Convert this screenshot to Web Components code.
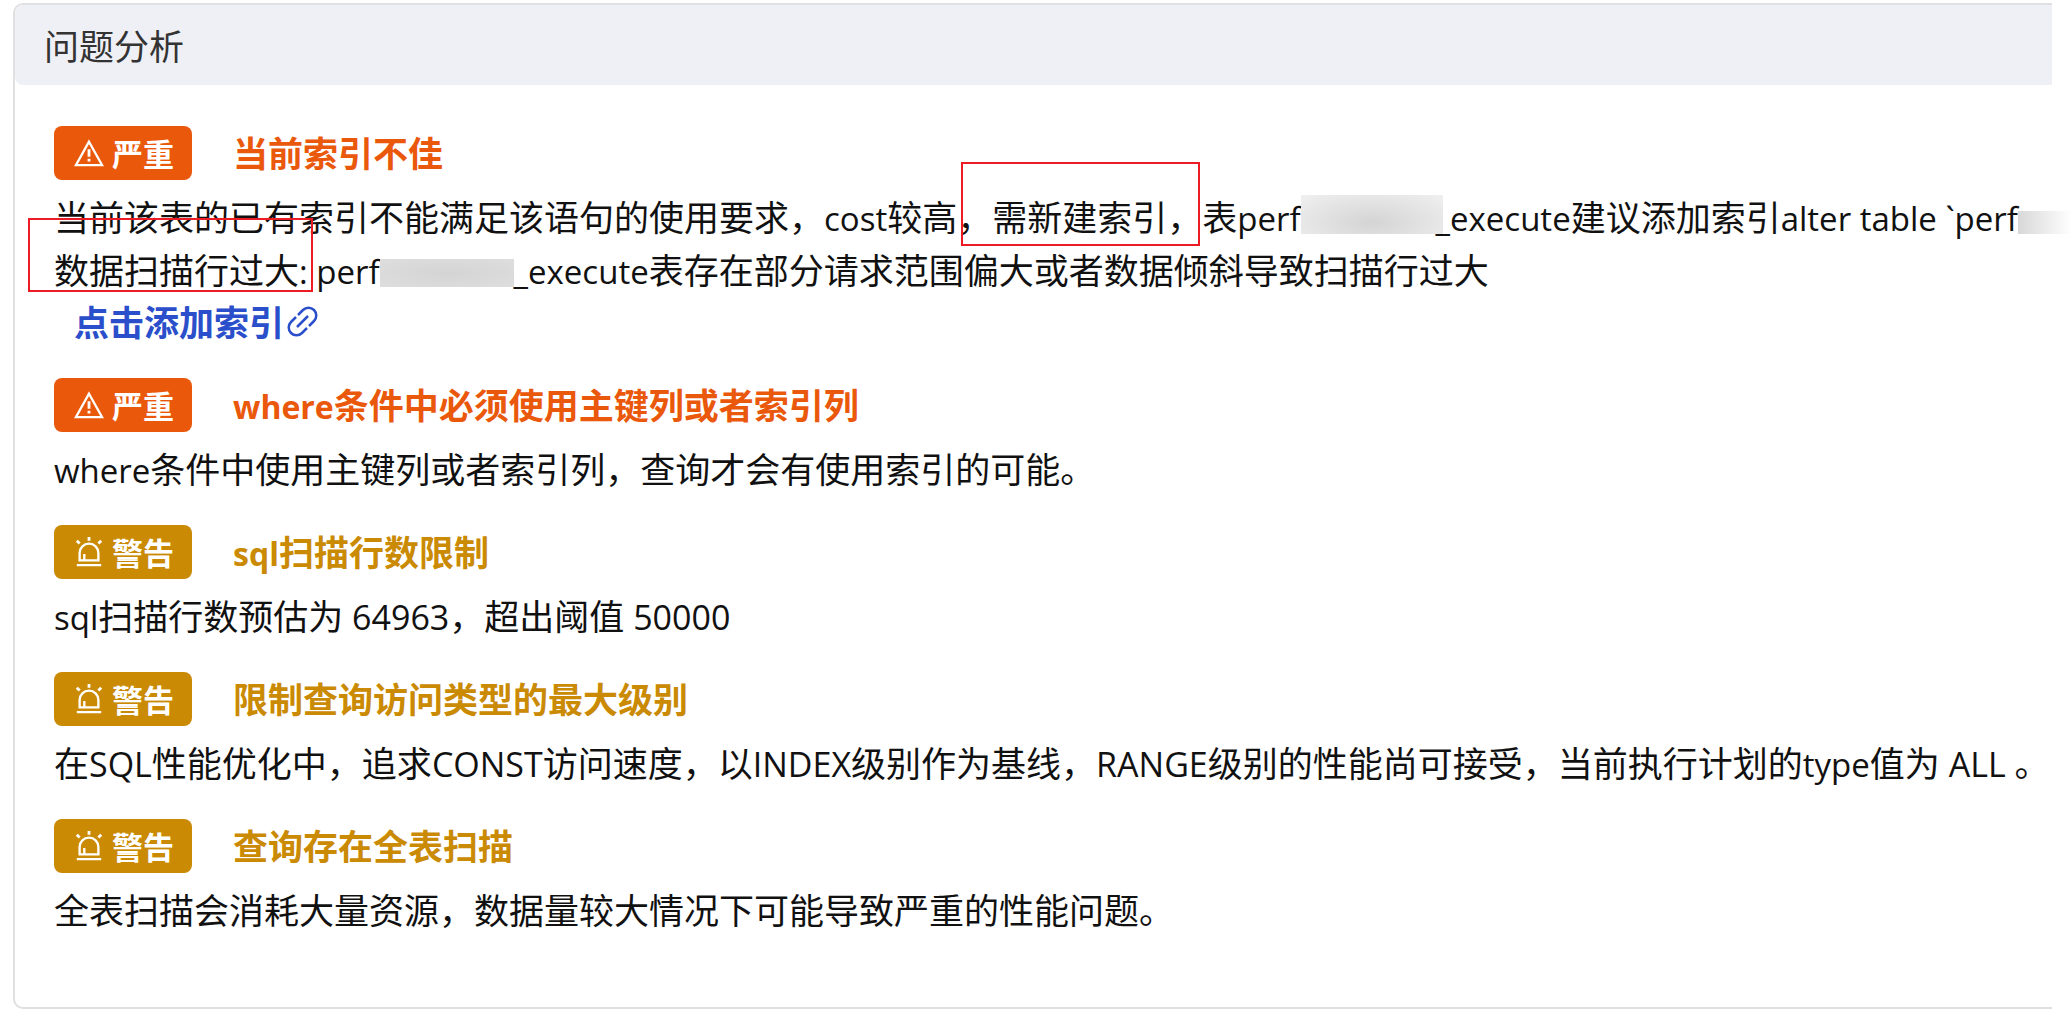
<!DOCTYPE html>
<html lang="zh-CN">
<head>
<meta charset="utf-8">
<title>问题分析</title>
<style>
  body {
    margin: 0;
    overflow-x: hidden;
    background: #fff;
    color: #111;
    font-family: "Noto Sans CJK SC", sans-serif;
    font-size: 35px;
  }

  /* latin runs sit a little smaller beside the CJK glyphs */
  .en {
    font-family: "Open Sans", sans-serif;
    font-size: 33px;
    line-height: 1;
  }

  .en.caps {
    font-size: 34px;
  }

  [slot="title"] .en {
    font-size: 32px;
  }
</style>
</head>
<body>

<analysis-panel>
  <span slot="title">问题分析</span>

  <issue-item level="severe">
    <span slot="title">当前索引不佳</span>
    <text-line>当前该表的已有索引不能满足该语句的使用要求，<span class="en">cost</span>较高<mark-box kind="tall">，需新建索引，</mark-box>表<span class="en">perf</span><masked-text size="large"></masked-text><span class="en">_execute</span>建议添加索引<span class="en">alter table `perf</span><masked-text size="small"></masked-text></text-line>
    <text-line><mark-box kind="wide">数据扫描行过大</mark-box><span class="en">: perf</span><masked-text></masked-text><span class="en">_execute</span>表存在部分请求范围偏大或者数据倾斜导致扫描行过大</text-line>
    <index-link href="#add-index">点击添加索引</index-link>
  </issue-item>

  <issue-item level="severe">
    <span slot="title"><span class="en">where</span>条件中必须使用主键列或者索引列</span>
    <text-line><span class="en">where</span>条件中使用主键列或者索引列，查询才会有使用索引的可能。</text-line>
  </issue-item>

  <issue-item level="warning">
    <span slot="title"><span class="en">sql</span>扫描行数限制</span>
    <text-line><span class="en">sql</span>扫描行数预估为<span class="en caps"> 64963</span>，超出阈值<span class="en caps"> 50000</span></text-line>
  </issue-item>

  <issue-item level="warning">
    <span slot="title">限制查询访问类型的最大级别</span>
    <text-line>在<span class="en caps">SQL</span>性能优化中，追求<span class="en caps">CONST</span>访问速度，以<span class="en caps">INDEX</span>级别作为基线，<span class="en caps">RANGE</span>级别的性能尚可接受，当前执行计划的<span class="en">type</span>值为<span class="en caps"> ALL </span>。</text-line>
  </issue-item>

  <issue-item level="warning">
    <span slot="title">查询存在全表扫描</span>
    <text-line>全表扫描会消耗大量资源，数据量较大情况下可能导致严重的性能问题。</text-line>
  </issue-item>
</analysis-panel>

<script>
const LEVELS = {
  severe: {
    label: '严重',
    icon: `<path d="M16 4 L30 29 H2 Z"/><path d="M16 12 V20 M16 22 V25" stroke-width="3"/>`
  },
  warning: {
    label: '警告',
    icon: `<path d="M3 30 H29 M6 25 V17 a10 10 0 0 1 20 0 V25 Z M11 24 V18"/>
      <path d="M16 0 V4 M3 4 L6 7 M29 4 L26 7" stroke-width="3"/>`
  }
}

class AnalysisPanel extends HTMLElement {
  constructor() {
    super()
    this.attachShadow({ mode: 'open' }).innerHTML = `
      <style>
        :host {
          display: block;
          margin: 3px 20px 12px 13px;
          border: 2px solid #e0e0e0;
          border-right: none;
          border-radius: 10px 0 0 10px;
        }

        h2 {
          margin: 0;
          padding: 0 29px;
          background: #eff0f5;
          border-radius: 8px 0 0 8px;
          color: #333;
          font-size: 35px;
          font-weight: 400;
          line-height: 80px;
        }

        .list {
          display: flex;
          flex-direction: column;
          gap: 31px;
          padding: 41px 39px 72px;
        }
      </style>
      <h2><slot name="title"></slot></h2>
      <div class="list"><slot></slot></div>`
  }
}

class IssueItem extends HTMLElement {
  constructor() {
    super()
    this.attachShadow({ mode: 'open' })
  }

  connectedCallback() {
    const level = LEVELS[this.getAttribute('level')]
    this.shadowRoot.innerHTML = `
      <style>
        :host {
          --level: #ea580c;
          display: block;
        }

        :host([level="warning"]) {
          --level: #ca8a04;
        }

        header {
          display: flex;
          gap: 41px;
          margin-bottom: 9px;
        }

        .badge {
          display: flex;
          align-items: center;
          gap: 8px;
          height: 54px;
          padding: 0 18px 0 20px;
          border-radius: 8px;
          background: var(--level);
          color: #fff;
          font-size: 31px;
          font-weight: 700;
          line-height: 54px;
        }

        svg {
          width: 30px;
          height: 30px;
          fill: none;
          stroke: currentColor;
          stroke-width: 2.5;
        }

        h3 {
          margin: 0;
          color: var(--level);
          font-size: 35px;
          font-weight: 700;
          line-height: 52px;
        }
      </style>
      <header>
        <span class="badge"><svg viewBox="0 0 32 32" aria-hidden="true">${level.icon}</svg>${level.label}</span>
        <h3><slot name="title"></slot></h3>
      </header>
      <slot></slot>`
  }
}

class TextLine extends HTMLElement {
  constructor() {
    super()
    this.attachShadow({ mode: 'open' }).innerHTML = `
      <style>
        :host {
          display: block;
          height: 53px;
          line-height: 53px;
          white-space: nowrap;
        }
      </style>
      <slot></slot>`
  }
}

// red frame drawn over a phrase
class MarkBox extends HTMLElement {
  constructor() {
    super()
    this.attachShadow({ mode: 'open' }).innerHTML = `
      <style>
        :host {
          position: relative;
          display: inline-block;
        }

        .frame {
          position: absolute;
          inset: -24px -14px 3px -26px;
          border: 2px solid #ed1c24;
          pointer-events: none;
        }

        :host([kind="tall"]) .frame {
          inset: -27px 2px -4px 4px;
        }
      </style>
      <slot></slot><span class="frame"></span>`
  }
}

// grey smear that hides part of a name
class MaskedText extends HTMLElement {
  constructor() {
    super()
    this.attachShadow({ mode: 'open' }).innerHTML = `
      <style>
        :host {
          display: inline-block;
          width: 134px;
          height: 28px;
          vertical-align: -3px;
          background: radial-gradient(ellipse, #d4d4d4, #dedede);
        }

        :host([size="large"]) {
          width: 142px;
          height: 39px;
          margin-right: -7px;
          background: radial-gradient(ellipse at 50% 70%, #d4d4d4, #f0f0f0);
        }

        :host([size="small"]) {
          width: 64px;
          height: 23px;
          background: linear-gradient(to right, #d8d8d8, #fff 54px);
        }
      </style>`
  }
}

class IndexLink extends HTMLElement {
  constructor() {
    super()
    this.attachShadow({ mode: 'open' })
  }

  connectedCallback() {
    this.shadowRoot.innerHTML = `
      <style>
        :host {
          display: block;
          height: 52px;
          padding-left: 20px;
          line-height: 52px;
        }

        a {
          display: inline-flex;
          align-items: center;
          gap: 3px;
          color: #2b4fcb;
          font-weight: 700;
          text-decoration: none;
        }

        svg {
          width: 31px;
          height: 31px;
          fill: none;
          stroke: currentColor;
          stroke-width: 2.5;
        }
      </style>
      <a href="${this.getAttribute('href')}"><slot></slot><svg viewBox="0 0 31 31" aria-hidden="true">
        <path d="M11 9 L16 4 a7 7 0 0 1 11 11 L22 20 M9 11 L4 16 a7 7 0 0 0 11 11 L20 22 M10 21 L21 10"/>
      </svg></a>`
  }
}

customElements.define('analysis-panel', AnalysisPanel)
customElements.define('issue-item', IssueItem)
customElements.define('text-line', TextLine)
customElements.define('mark-box', MarkBox)
customElements.define('masked-text', MaskedText)
customElements.define('index-link', IndexLink)
</script>
</body>
</html>
